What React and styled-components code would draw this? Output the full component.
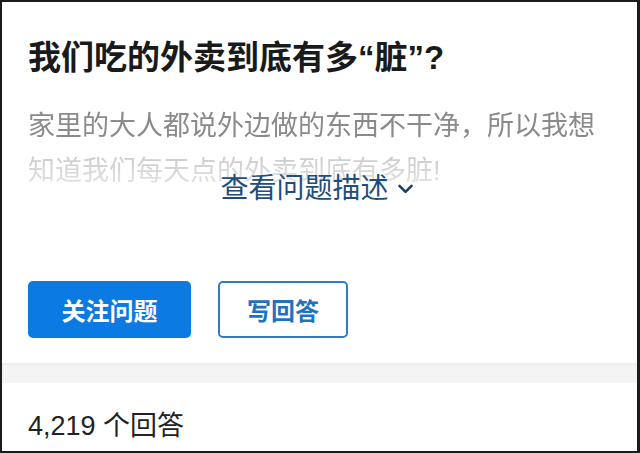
import React from 'react';
import styled, { createGlobalStyle } from 'styled-components';

const GlobalStyle = createGlobalStyle`
  html, body {
    margin: 0;
    padding: 0;
    background: #ffffff;
  }
  body {
    font-family: "Liberation Sans", "Noto Sans CJK SC", sans-serif;
  }
`;

const Frame = styled.div`
  box-sizing: border-box;
  width: 640px;
  height: 453px;
  border: 2px solid #1c1c1c;
  border-right-width: 3px;
  background: #ffffff;
  overflow: hidden;
  display: flex;
  flex-direction: column;
`;

const Card = styled.section`
  padding: 34px 26px 25px;
  display: flex;
  flex-direction: column;
`;

const Title = styled.h1`
  margin: 0;
  font-size: 33px;
  line-height: 44px;
  font-weight: 700;
  color: #1a1a1a;
`;

const Description = styled.p`
  margin: 24px 0 0;
  font-size: 27px;
  line-height: 45px;
  color: #8a8a8a;
  -webkit-mask-image: linear-gradient(to bottom, #000 50%, rgba(0, 0, 0, 0.45) 56%, rgba(0, 0, 0, 0.18) 100%);
  mask-image: linear-gradient(to bottom, #000 50%, rgba(0, 0, 0, 0.45) 56%, rgba(0, 0, 0, 0.18) 100%);
`;

const ExpandLink = styled.button`
  align-self: center;
  margin: -23px 0 0;
  padding: 0;
  border: 0;
  background: transparent;
  display: flex;
  align-items: center;
  gap: 9px;
  font-family: inherit;
  font-size: 28px;
  line-height: 36px;
  color: #234d79;
  cursor: pointer;
  position: relative;
  left: -3px;
`;

const Actions = styled.div`
  margin-top: 74px;
  display: flex;
  gap: 27px;
`;

const Button = styled.button`
  box-sizing: border-box;
  height: 57px;
  width: ${({ $wide }) => ($wide ? '163px' : '130px')};
  border-radius: 5px;
  font-family: inherit;
  font-size: 24px;
  font-weight: 600;
  padding: 0;
  cursor: pointer;
  border: 2px solid ${({ $primary }) => ($primary ? '#0b7ae2' : '#2f7cc3')};
  background: ${({ $primary }) => ($primary ? '#0b7ae2' : '#ffffff')};
  color: ${({ $primary }) => ($primary ? '#ffffff' : '#1f72c1')};
`;

const Divider = styled.div`
  height: 20px;
  background: #f4f4f4;
  box-shadow: inset 0 2px 3px rgba(0, 0, 0, 0.03);
`;

const AnswerCount = styled.div`
  padding: 25px 26px 0;
  font-size: 27px;
  line-height: 36px;
  color: #222222;
`;

function Chevron() {
  return (
    <svg width="15" height="10" viewBox="0 0 15 10" fill="none">
      <path d="M1.5 1.8 L7.5 7.8 L13.5 1.8" stroke="#1d3f66" strokeWidth="2.6" strokeLinecap="round" strokeLinejoin="round" />
    </svg>
  );
}

export default function App() {
  return (
    <Frame>
      <GlobalStyle />
      <Card>
        <Title>我们吃的外卖到底有多“脏”?</Title>
        <Description>
          家里的大人都说外边做的东西不干净，所以我想
          <br />
          知道我们每天点的外卖到底有多脏!
        </Description>
        <ExpandLink>
          查看问题描述
          <Chevron />
        </ExpandLink>
        <Actions>
          <Button $primary $wide>关注问题</Button>
          <Button>写回答</Button>
        </Actions>
      </Card>
      <Divider />
      <AnswerCount>4,219 个回答</AnswerCount>
    </Frame>
  );
}
